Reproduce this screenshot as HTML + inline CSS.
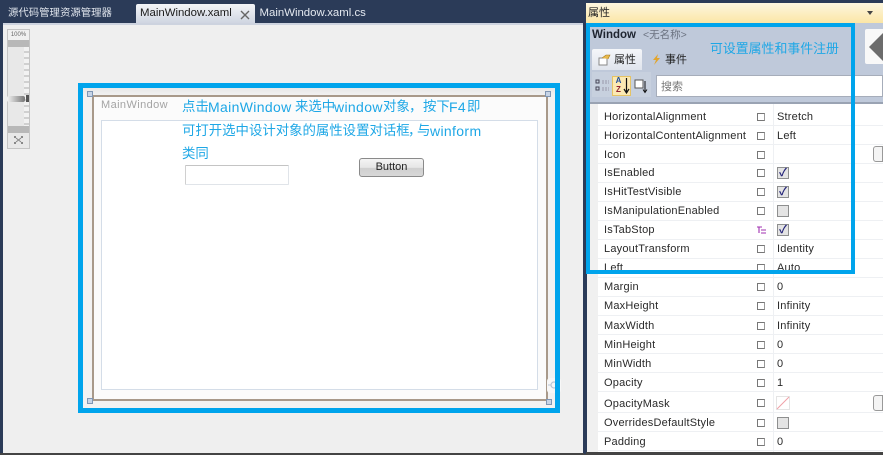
<!DOCTYPE html>
<html><head><meta charset="utf-8">
<style>
html,body{margin:0;padding:0;background:#fff}
#p{position:relative;width:883px;height:458px;overflow:hidden;background:#2b3b58;font-family:"Liberation Sans","Noto Sans CJK SC",sans-serif;filter:blur(.35px)}
#p div{position:absolute;box-sizing:border-box}
.t{white-space:nowrap;line-height:14px}
.r{left:604px;font-size:11px;color:#2a2a2a;letter-spacing:.2px;margin-top:1px}
.v{left:777px;font-size:11px;color:#2a2a2a;letter-spacing:.2px;margin-top:1px}
.l{left:598px;width:285px;height:1px;background:#eef0f3}
.m{left:757px;width:8px;height:8px;border:1px solid #777;background:#fff;border-right-color:#999}
.cb{left:777px;width:12px;height:12px;margin-top:1px;border:1px solid #8e8f8f;background:#e4e4e4;color:#25257a;font-size:11px;line-height:10px;text-align:center;font-weight:bold}
.cy{color:#1ea7e6;font-size:13.4px}
.la{font-size:14px;letter-spacing:.35px}
.h{width:6px;height:6px;border:1px solid #7f96b4;background:#c7d4e6}
</style></head><body><div id="p">
<!-- tabs -->
<div class="t" style="left:8px;top:7px;font-size:10.4px;color:#dfe4ec">源代码管理资源管理器</div>
<div style="left:136px;top:4px;width:119px;height:20px;background:linear-gradient(#f3f5f8,#ced4e0);border-radius:2px 2px 0 0"></div>
<div class="t" style="left:140px;top:6px;font-size:11.4px;color:#1a1a1a">MainWindow.xaml</div>
<svg style="position:absolute;left:240px;top:10px" width="10" height="10"><path d="M1 1L9 9M9 1L1 9" stroke="#666" stroke-width="1.4"/></svg>
<div class="t" style="left:259.500px;top:6px;font-size:11.400px;color:#e4e9f0">MainWindow.xaml.cs</div>
<!-- editor -->
<div style="left:3px;top:23px;width:580px;height:431px;background:#efefef;border-top:2px solid #cdd3df"></div>
<div style="left:0;top:453px;width:883px;height:5px;background:#fff;border-top:2px solid #444"></div>
<!-- zoom slider -->
<div style="left:7px;top:29px;width:23px;height:120px;background:#e8e8e8;border:1px solid #c4c4c4"></div>
<div class="t" style="left:8px;top:30px;width:21px;text-align:center;font-size:6px;line-height:10px;color:#666;background:#f0f0f0">100%</div>
<div style="left:8px;top:40px;width:21px;height:7px;background:#b8b8b8"></div>
<div style="left:8px;top:126px;width:21px;height:7px;background:#b8b8b8"></div>
<div style="left:24px;top:47px;width:5px;height:79px;background:repeating-linear-gradient(#f2f2f2 0,#f2f2f2 4px,#d0d0d0 4px,#d0d0d0 6px)"></div>
<div style="left:7px;top:96px;width:18px;height:6px;background:linear-gradient(90deg,#f4f4f4,#777);border-radius:2px"></div>
<div style="left:26px;top:95px;width:3px;height:7px;background:#555"></div>
<svg style="position:absolute;left:13px;top:135px" width="11" height="10"><path d="M3 3L8 7M8 3L3 7" stroke="#888" stroke-width="1"/><path d="M1 1H3V3H1ZM8 1H10V3H8ZM1 7H3V9H1ZM8 7H10V9H8Z" fill="#888"/></svg>
<!-- window -->
<div style="left:83px;top:88px;width:472px;height:320px;background:linear-gradient(#e8e8e8,#f2f2f2 8px)"></div>
<div style="left:92px;top:95px;width:456px;height:306px;background:#fff;border:2px solid #a8998a"></div>
<div style="left:94px;top:97px;width:452px;height:302px;background:#fbfbfb"></div>
<div style="left:101px;top:120px;width:437px;height:270px;background:#fff;border:1px solid #d4dde8"></div>
<div class="t" style="left:101px;top:98px;font-size:11px;color:#a4a4a4;letter-spacing:.4px">MainWindow</div>
<div class="h" style="left:87px;top:91px"></div>
<div class="h" style="left:545px;top:91px"></div>
<div class="h" style="left:87px;top:398px"></div>
<div class="h" style="left:546px;top:399px"></div>
<div style="left:547px;top:378px;width:14px;height:15px;background:#f7f7f7;border-radius:3px"></div>
<svg style="position:absolute;left:548px;top:380px" width="10" height="10"><circle cx="6" cy="5" r="3" fill="none" stroke="#b9c4d4" stroke-width="1.2"/><path d="M0 5H3" stroke="#b9c4d4"/></svg>
<div class="t cy" style="left:182px;top:100px">点击</div>
<div class="t cy la" style="left:208px;top:100px">MainWindow</div>
<div class="t cy" style="left:295px;top:100px">来选中</div>
<div class="t cy la" style="left:334px;top:100px">window</div>
<div class="t cy" style="left:383px;top:100px">对象</div>
<div class="t cy" style="left:409px;top:100px">，</div>
<div class="t cy" style="left:423px;top:100px">按下</div>
<div class="t cy la" style="left:449px;top:100px">F4</div>
<div class="t cy" style="left:467px;top:100px">即</div>
<div class="t cy" style="left:182px;top:124px">可打开选中设计对象的属性设置对话框</div>
<div class="t cy" style="left:408px;top:124px">，</div>
<div class="t cy" style="left:417px;top:124px">与</div>
<div class="t cy la" style="left:430px;top:124px">winform</div>
<div class="t cy" style="left:182px;top:147px">类同</div>
<div style="left:185px;top:165px;width:104px;height:20px;background:#fff;border:1px solid #e0e4e9;border-top-color:#c4c4c4;border-left-color:#d0d0d0;border-radius:1px"></div>
<div class="t" style="left:359px;top:158px;width:65px;height:19px;border:1px solid #8a8a8a;border-radius:3px;background:linear-gradient(#f4f4f4 0,#e6e6e6 50%,#cfcfcf 55%,#d8d8d8);text-align:center;font-size:11px;line-height:17px;color:#222">Button</div>
<div style="left:78px;top:83px;width:482px;height:330px;border:5px solid #00a4ec"></div>
<!-- right panel -->
<div style="left:586px;top:3px;width:297px;height:20px;background:linear-gradient(#fdf6df,#fbe6a6)"></div>
<div class="t" style="left:588px;top:6px;font-size:11px;color:#222">属性</div>
<div style="left:867px;top:11px;width:0;height:0;border:3px solid transparent;border-top:4px solid #444"></div>
<div style="left:586px;top:23px;width:297px;height:81px;background:#bfc9da"></div>
<div class="t" style="left:592px;top:28px;font-size:11.500px;font-weight:bold;color:#1e2430">Window</div>
<div class="t" style="left:643px;top:28px;font-size:10.5px;color:#6b7280">&lt;无名称&gt;</div>
<div style="left:865px;top:29px;width:18px;height:35px;background:#f8f8f8;border-radius:2px 0 0 2px"></div>
<svg style="position:absolute;left:869px;top:33px" width="14" height="28"><path d="M0 14L14 0V28Z" fill="#6c6c6c"/></svg>
<div style="left:592px;top:49px;width:50px;height:21px;background:linear-gradient(#f4f6f9,#dfe4ec);border-radius:2px 2px 0 0"></div>
<svg style="position:absolute;left:598px;top:54px" width="13" height="12"><path d="M1 4H9V11H1Z" fill="#fff" stroke="#888"/><path d="M4 4L8 1H12L10 5" fill="#e8b94c" stroke="#a67a20" stroke-width=".6"/></svg>
<div class="t" style="left:614px;top:53px;font-size:11px;color:#222">属性</div>
<svg style="position:absolute;left:651px;top:54px" width="10" height="12"><path d="M7 0L2 6H5L3 11L9 4H6Z" fill="#e2a52e"/></svg>
<div class="t" style="left:665px;top:53px;font-size:11px;color:#222">事件</div>
<div style="left:592px;top:72px;width:59px;height:25px;background:#c7d0de"></div>
<div style="left:612px;top:76px;width:19px;height:20px;background:#fbe9b3;border:1px solid #e5c365"></div>
<svg style="position:absolute;left:595px;top:78px" width="16" height="15"><rect x="1" y="2" width="3" height="3" fill="none" stroke="#445"/><rect x="1" y="9" width="3" height="3" fill="none" stroke="#445"/><path d="M7 3H14M7 5H14M7 10H14M7 12H14" stroke="#99a" stroke-dasharray="2 1"/></svg>
<div class="t" style="left:614px;top:76px;width:9px;font-size:8px;line-height:9px;font-weight:bold;color:#1f4e9c;text-align:center">A<br><span style="color:#902030">Z</span></div>
<svg style="position:absolute;left:623px;top:78px" width="7" height="16"><path d="M3.500 0V14M1 11L3.500 15L6 11" stroke="#111" fill="none" stroke-width="1.200"/></svg>
<svg style="position:absolute;left:634px;top:79px" width="15" height="15"><rect x="1" y="1" width="8" height="8" fill="#fff" stroke="#555"/><path d="M11 2V13M9 10.500L11 13.500L13 10.500" stroke="#111" fill="none"/></svg>
<div style="left:656px;top:75px;width:227px;height:22px;background:#fff;border:1px solid #a6adba"></div>
<div class="t" style="left:661px;top:80px;font-size:11px;color:#777">搜索</div>
<div style="left:586px;top:102px;width:297px;height:351px;background:#fff;border-top:2px solid #9aa3b3"></div>
<div style="left:586px;top:104px;width:12px;height:349px;background:#f0f0f0"></div>
<div style="left:584px;top:23px;width:3px;height:431px;background:#2b3b58"></div>
<div style="left:773px;top:104px;width:1px;height:349px;background:#eef0f3"></div>
<div class="l" style="top:125px"></div><div class="l" style="top:144px"></div><div class="l" style="top:163px"></div><div class="l" style="top:182px"></div><div class="l" style="top:201px"></div><div class="l" style="top:220px"></div><div class="l" style="top:239px"></div><div class="l" style="top:258px"></div><div class="l" style="top:277px"></div><div class="l" style="top:296px"></div><div class="l" style="top:315px"></div><div class="l" style="top:334px"></div><div class="l" style="top:353px"></div><div class="l" style="top:372px"></div><div class="l" style="top:391px"></div><div class="l" style="top:412px"></div><div class="l" style="top:431px"></div><div class="l" style="top:450px"></div>
<div class="t r" style="top:109px">HorizontalAlignment</div><div class="m" style="top:113px"></div><div class="t v" style="top:109px">Stretch</div>
<div class="t r" style="top:128px">HorizontalContentAlignment</div><div class="m" style="top:132px"></div><div class="t v" style="top:128px">Left</div>
<div class="t r" style="top:147px">Icon</div><div class="m" style="top:151px"></div>
<div style="left:873px;top:146px;width:10px;height:16px;background:#f4f4f4;border:1px solid #999;border-radius:3px 0 0 3px"></div>
<div class="t r" style="top:165px">IsEnabled</div><div class="m" style="top:169px"></div><div class="cb" style="top:166px">✓</div>
<div class="t r" style="top:184px">IsHitTestVisible</div><div class="m" style="top:188px"></div><div class="cb" style="top:185px">✓</div>
<div class="t r" style="top:203px">IsManipulationEnabled</div><div class="m" style="top:207px"></div><div class="cb" style="top:204px"></div>
<div class="t r" style="top:222px">IsTabStop</div>
<svg style="position:absolute;left:757px;top:226px" width="9" height="8"><path d="M0 1H5M2 1V7M4 4H9M4 7H9" stroke="#a030b0" stroke-width="1.100"/></svg>
<div class="cb" style="top:223px">✓</div>
<div class="t r" style="top:241px">LayoutTransform</div><div class="m" style="top:245px"></div><div class="t v" style="top:241px">Identity</div>
<div class="t r" style="top:260px">Left</div><div class="m" style="top:264px"></div><div class="t v" style="top:260px">Auto</div>
<div class="t r" style="top:279px">Margin</div><div class="m" style="top:283px"></div><div class="t v" style="top:279px">0</div>
<div class="t r" style="top:298px">MaxHeight</div><div class="m" style="top:302px"></div><div class="t v" style="top:298px">Infinity</div>
<div class="t r" style="top:318px">MaxWidth</div><div class="m" style="top:322px"></div><div class="t v" style="top:318px">Infinity</div>
<div class="t r" style="top:337px">MinHeight</div><div class="m" style="top:341px"></div><div class="t v" style="top:337px">0</div>
<div class="t r" style="top:356px">MinWidth</div><div class="m" style="top:360px"></div><div class="t v" style="top:356px">0</div>
<div class="t r" style="top:375px">Opacity</div><div class="m" style="top:379px"></div><div class="t v" style="top:375px">1</div>
<div class="t r" style="top:396px">OpacityMask</div><div class="m" style="top:399px"></div>
<svg style="position:absolute;left:776px;top:396px" width="14" height="14"><rect x=".5" y=".5" width="13" height="13" fill="#fff" stroke="#e4e4e4"/><path d="M1 13L13 1" stroke="#f0a0a8"/></svg>
<div style="left:873px;top:395px;width:10px;height:16px;background:#f4f4f4;border:1px solid #999;border-radius:3px 0 0 3px"></div>
<div class="t r" style="top:415px">OverridesDefaultStyle</div><div class="m" style="top:419px"></div><div class="cb" style="top:416px"></div>
<div class="t r" style="top:434px">Padding</div><div class="m" style="top:438px"></div><div class="t v" style="top:434px">0</div>
<div style="left:586px;top:452px;width:297px;height:2px;background:#444"></div>
<div style="left:586px;top:23px;width:269px;height:251px;border:4px solid #00a4ec"></div>
<div class="t" style="left:710px;top:42px;font-size:12.900px;color:#1ea7e6">可设置属性和事件注册</div>
</div></body></html>
